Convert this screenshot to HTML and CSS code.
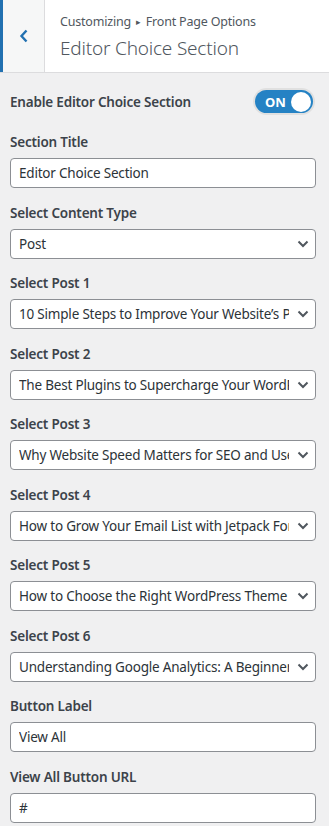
FILE: index.html
```html
<!DOCTYPE html>
<html lang="en">

<head>
  <meta charset="UTF-8">
  <meta name="viewport" content="width=device-width, initial-scale=1.0">
  <title>Editor Choice Section</title>
  <link rel="stylesheet" href="styles.css">
</head>

<body>
  <div class="section-header">
    <button class="back-button" aria-label="Back">
      <svg width="10" height="14" viewBox="0 0 10 14"><path d="M7.5 1.5 L2.5 7 L7.5 12.5" fill="none" stroke="#2271b1" stroke-width="2.4"/></svg>
    </button>
    <div class="section-title">
      <span class="breadcrumb">Customizing <span class="crumb-arrow">&#9656;</span> Front Page Options</span>
      <h3>Editor Choice Section</h3>
    </div>
  </div>

  <div class="controls">
    <div class="control toggle-control">
      <span class="control-label">Enable Editor Choice Section</span>
      <label class="switch">
        <input type="checkbox" checked>
        <span class="switch-track"><span class="switch-text">ON</span><span class="switch-knob"></span></span>
      </label>
    </div>

    <div class="control">
      <label class="control-label" for="section-title">Section Title</label>
      <input type="text" id="section-title" value="Editor Choice Section">
    </div>

    <div class="control">
      <label class="control-label">Select Content Type</label>
      <div class="select-wrap">
        <select><option>Post</option><option>Page</option><option>Category</option></select>
        <svg class="chevron" width="12" height="8" viewBox="0 0 12 8"><path d="M1.5 1.5 L6 6 L10.5 1.5" fill="none" stroke="#50575e" stroke-width="2"/></svg>
      </div>
    </div>

    <div class="control">
      <label class="control-label">Select Post 1</label>
      <div class="select-wrap">
        <select><option>10 Simple Steps to Improve Your Website’s Performance</option></select>
        <svg class="chevron" width="12" height="8" viewBox="0 0 12 8"><path d="M1.5 1.5 L6 6 L10.5 1.5" fill="none" stroke="#50575e" stroke-width="2"/></svg>
      </div>
    </div>

    <div class="control">
      <label class="control-label">Select Post 2</label>
      <div class="select-wrap">
        <select><option>The Best Plugins to Supercharge Your WordPress Site</option></select>
        <svg class="chevron" width="12" height="8" viewBox="0 0 12 8"><path d="M1.5 1.5 L6 6 L10.5 1.5" fill="none" stroke="#50575e" stroke-width="2"/></svg>
      </div>
    </div>

    <div class="control">
      <label class="control-label">Select Post 3</label>
      <div class="select-wrap">
        <select><option>Why Website Speed Matters for SEO and User Experience</option></select>
        <svg class="chevron" width="12" height="8" viewBox="0 0 12 8"><path d="M1.5 1.5 L6 6 L10.5 1.5" fill="none" stroke="#50575e" stroke-width="2"/></svg>
      </div>
    </div>

    <div class="control">
      <label class="control-label">Select Post 4</label>
      <div class="select-wrap">
        <select><option>How to Grow Your Email List with Jetpack Forms</option></select>
        <svg class="chevron" width="12" height="8" viewBox="0 0 12 8"><path d="M1.5 1.5 L6 6 L10.5 1.5" fill="none" stroke="#50575e" stroke-width="2"/></svg>
      </div>
    </div>

    <div class="control">
      <label class="control-label">Select Post 5</label>
      <div class="select-wrap">
        <select><option>How to Choose the Right WordPress Theme for Your Blog</option></select>
        <svg class="chevron" width="12" height="8" viewBox="0 0 12 8"><path d="M1.5 1.5 L6 6 L10.5 1.5" fill="none" stroke="#50575e" stroke-width="2"/></svg>
      </div>
    </div>

    <div class="control">
      <label class="control-label">Select Post 6</label>
      <div class="select-wrap">
        <select><option>Understanding Google Analytics: A Beginner’s Guide</option></select>
        <svg class="chevron" width="12" height="8" viewBox="0 0 12 8"><path d="M1.5 1.5 L6 6 L10.5 1.5" fill="none" stroke="#50575e" stroke-width="2"/></svg>
      </div>
    </div>

    <div class="control">
      <label class="control-label" for="button-label">Button Label</label>
      <input type="text" id="button-label" value="View All">
    </div>

    <div class="control">
      <label class="control-label" for="button-url">View All Button URL</label>
      <input type="text" id="button-url" value="#">
    </div>
  </div>
</body>

</html>
```

FILE: styles.css
```css
body {
  font-family: "Noto Sans", "Open Sans", sans-serif;
  background-color: #f0f0f1;
  color: #3c434a;
  margin: 0;
  width: 329px;
  overflow: hidden;
}

.section-header {
  display: flex;
  height: 72px;
  background-color: #fff;
  border-bottom: 1px solid #dcdcde;
}

.back-button {
  width: 45px;
  padding: 0;
  border: none;
  border-left: 3px solid #2271b1;
  border-right: 1px solid #dcdcde;
  background-color: #f6f7f7;
  display: flex;
  align-items: center;
  justify-content: center;
}

.section-title {
  padding: 12px 0 0 15px;
  color: #50575e;
}

.breadcrumb {
  display: block;
  font-size: 12.5px;
  line-height: 20px;
  letter-spacing: -0.2px;
}

.crumb-arrow {
  font-size: 9px;
  vertical-align: 1px;
  margin: 0 2px;
}

.section-title h3 {
  margin: 2px 0 0;
  font-size: 19px;
  font-weight: 300;
  line-height: 28px;
  letter-spacing: -0.2px;
}

.controls {
  padding: 16px 13px 0 10px;
}

.control {
  display: flex;
  flex-direction: column;
  gap: 6px;
  margin-bottom: 14.5px;
}

.control-label {
  font-size: 13.5px;
  font-weight: 600;
  line-height: 20px;
  letter-spacing: -0.2px;
  color: #3c434a;
}

.toggle-control {
  flex-direction: row;
  justify-content: space-between;
  align-items: center;
  height: 25px;
  margin-bottom: 18px;
}

.switch input {
  display: none;
}

.switch-track {
  display: flex;
  align-items: center;
  justify-content: space-between;
  width: 58px;
  height: 23px;
  padding: 0 2px 0 10px;
  box-sizing: border-box;
  border-radius: 12px;
  background-color: #2582c4;
  box-shadow: 0 0 0 2px #e0e0e0;
  margin-right: 3px;
}

.switch-text {
  color: #fff;
  font-size: 13px;
  font-weight: 700;
}

.switch-knob {
  width: 20px;
  height: 20px;
  border-radius: 50%;
  background-color: #fff;
}

.control input[type="text"],
.control select {
  width: 100%;
  height: 30px;
  box-sizing: border-box;
  border: 1px solid #8c8f94;
  border-radius: 4px;
  background-color: #fff;
  color: #2c3338;
  font-family: inherit;
  font-size: 13.5px;
  letter-spacing: -0.2px;
  padding: 0 8px;
  margin: 0;
}

.select-wrap {
  position: relative;
}

.control select {
  appearance: none;
  -webkit-appearance: none;
  padding-right: 26px;
}

.chevron {
  position: absolute;
  right: 7px;
  top: 11px;
  pointer-events: none;
}
```
